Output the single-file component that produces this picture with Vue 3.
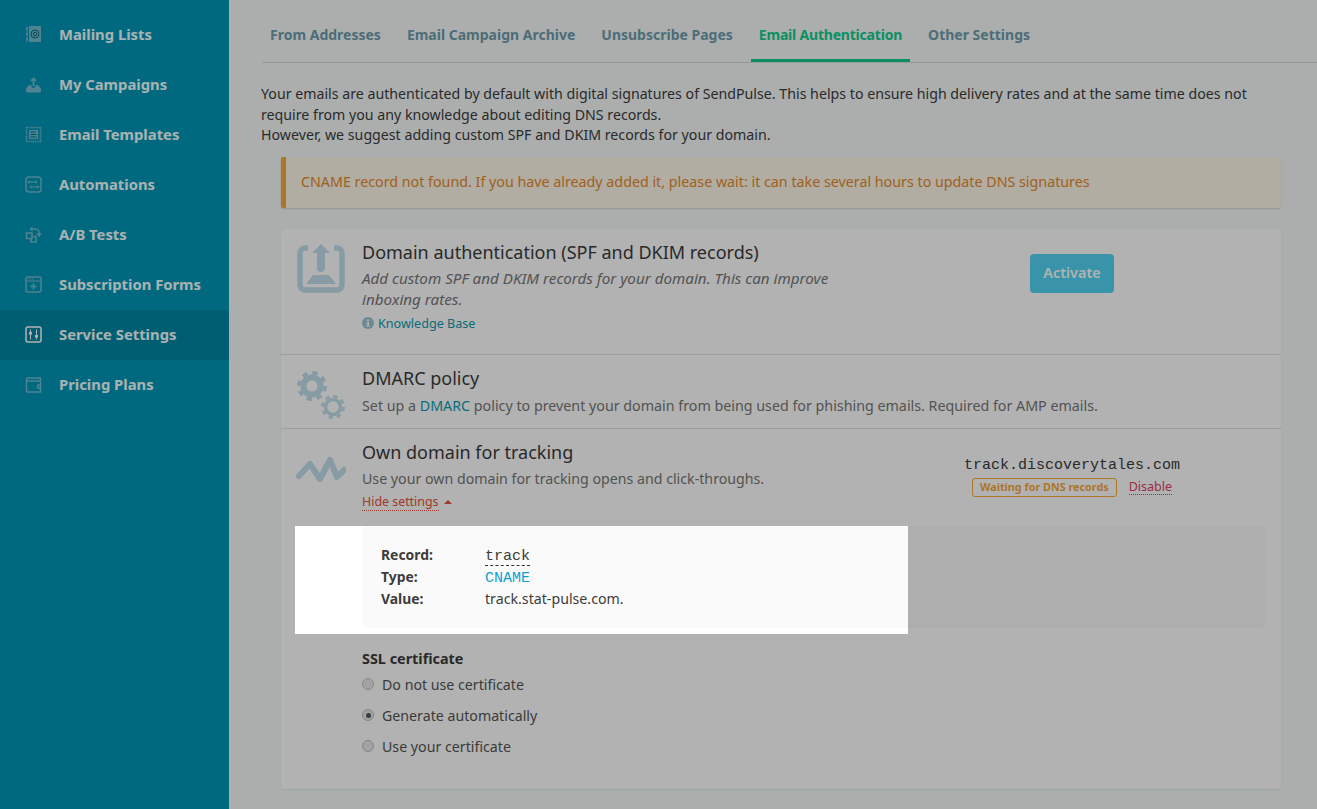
<script setup>
const navItems = [
  { label: 'Mailing Lists', icon: '<path fill="currentColor" stroke="none" d="M4 0h12v16H4z"/><path stroke-width="1" d="M2 .500v15"/><path stroke-width="2.200" d="M1 2.500h2M1 8h2M1 13.500h2"/><circle cx="10" cy="8" r="4" stroke="#006a80" stroke-width="1"/><circle cx="10" cy="8" r="1.700" stroke="#006a80" stroke-width="1"/>' },
  { label: 'My Campaigns', icon: '<path fill="currentColor" stroke="none" d="M4 9h2.500v1.500L8 12h1l1.500-1.500V9H13l3 3.500V15a1.500 1.500 0 0 1-1.500 1.500h-12A1.500 1.500 0 0 1 1 15v-2.500z"/><path stroke-width="1.800" d="M8.500 10V3M6 5l2.500-2.500L11 5"/>' },
  { label: 'Email Templates', icon: '<rect x="1.500" y="1.500" width="14" height="14" stroke-dasharray="1.500 .8" stroke-width="1.600"/><path fill="currentColor" stroke="none" d="M4 4h9v9H4z"/><path stroke="#006a80" stroke-width="1" d="M5.500 6h5M5.500 8.500h6M5.500 11h6"/>' },
  { label: 'Automations', icon: '<rect x="1" y="1" width="15" height="15" rx="3"/><path stroke-width="1" d="M4 6h6M7 11h6"/><circle cx="4" cy="6" r="1" stroke-width="1"/><circle cx="11" cy="6" r="1" stroke-width="1"/><circle cx="6" cy="11" r="1" stroke-width="1"/><circle cx="13" cy="11" r="1" stroke-width="1"/>' },
  { label: 'A/B Tests', icon: '<rect x="1.500" y="7" width="5.500" height="5.500" stroke-width="1.600"/><path stroke-width="1.600" d="M8 10.500h3v5.500H6v-3"/><path stroke-width="1.600" d="M7 3h3.500a3.500 3.500 0 0 1 3.500 3.500V8"/><path fill="currentColor" stroke="none" d="M11 7.500h6l-3 3.500zM7.500.500v5L4.500 3z"/>' },
  { label: 'Subscription Forms', icon: '<rect x="1" y="1" width="15" height="15" rx="1.500"/><path stroke-width="1" d="M1 5h15M3 3h1M5 3h1M7 3h1"/><path stroke-width="1.500" d="M8.500 7.500v6M5.500 10.500h6"/>' },
  { label: 'Service Settings', active: true, icon: '<rect x="1" y="1" width="15" height="15" rx="2"/><path stroke-width="1" d="M5.500 3.500v10M11.500 3.500v10"/><path fill="currentColor" stroke="none" d="M4 6h3v2.500H4zM10 9h3v2.500h-3z"/>' },
  { label: 'Pricing Plans', icon: '<path d="M1.500 4.500V15a1 1 0 0 0 1 1h13V5H2.500a1 1 0 0 1-1-1 2 2 0 0 1 1-2H15.500v3"/><path stroke-width="1.300" d="M16 9h-3.500v3H16"/>' },
]

const tabs = [
  { label: 'From Addresses' },
  { label: 'Email Campaign Archive' },
  { label: 'Unsubscribe Pages' },
  { label: 'Email Authentication', active: true },
  { label: 'Other Settings' },
]

const sslOptions = [
  { label: 'Do not use certificate' },
  { label: 'Generate automatically', checked: true },
  { label: 'Use your certificate' },
]
</script>

<template>
  <div class="page">
    <aside class="sidebar">
      <a v-for="item in navItems" :key="item.label" class="nav-item" :class="{ active: item.active }">
        <svg class="nav-icon" viewBox="0 0 17 17" fill="none" stroke="currentColor" stroke-width="1.500" v-html="item.icon"></svg>
        <span>{{ item.label }}</span>
      </a>
    </aside>

    <main class="main">
      <nav class="tabs">
        <a v-for="tab in tabs" :key="tab.label" class="tab" :class="{ active: tab.active }">{{ tab.label }}</a>
      </nav>

      <div class="content">
        <p class="intro">
          Your emails are authenticated by default with digital signatures of SendPulse. This helps to ensure high delivery rates and at the same time does not require from you any knowledge about editing DNS records.<br>
          However, we suggest adding custom SPF and DKIM records for your domain.
        </p>

        <div class="alert">CNAME record not found. If you have already added it, please wait: it can take several hours to update DNS signatures</div>

        <section class="card">
          <div class="row row-domain">
            <svg class="row-icon" viewBox="0 0 50 50" fill="none">
              <path d="M12 4H9a5 5 0 0 0-5 5v32a5 5 0 0 0 5 5h32a5 5 0 0 0 5-5V9a5 5 0 0 0-5-5h-3" stroke="#c2dfeb" stroke-width="5.500"/>
              <path d="M25 0l9 9h-5v15a4 4 0 0 1-8 0V9h-5z" fill="#c2dfeb"/>
              <path d="M17 31h16l7 9H10z" fill="#c2dfeb"/>
            </svg>
            <div class="row-body domain-body">
              <h3>Domain authentication (SPF and DKIM records)</h3>
              <p class="desc italic">Add custom SPF and DKIM records for your domain. This can improve inboxing rates.</p>
              <a class="kb">
                <svg viewBox="0 0 12 12" width="12" height="12"><circle cx="6" cy="6" r="6" fill="#9cc5d6"/><path d="M5 2.500h2v1.500H5zM4.700 5h2.300v3.500h.7v1H4.500v-1h.7V6h-.5z" fill="#fff"/></svg>
                Knowledge Base
              </a>
            </div>
            <div class="row-side domain-side"><button class="btn">Activate</button></div>
          </div>

          <div class="row row-dmarc">
            <svg class="row-icon" viewBox="0 0 50 50" fill="none" stroke="#c2dfeb">
              <circle cx="16" cy="15" r="8.500" stroke-width="6"/>
              <circle cx="16" cy="15" r="13" stroke-width="4" stroke-dasharray="5.200 5"/>
              <circle cx="37" cy="36" r="7.500" stroke-width="3.500"/>
              <circle cx="37" cy="36" r="10.500" stroke-width="3" stroke-dasharray="4.200 4.050"/>
            </svg>
            <div class="row-body">
              <h3>DMARC policy</h3>
              <p class="desc">Set up a <a class="link">DMARC</a> policy to prevent your domain from being used for phishing emails. Required for AMP emails.</p>
            </div>
          </div>

          <div class="row-tracking">
            <div class="row row-own">
              <svg class="row-icon wave" viewBox="0 0 50 28" fill="none">
                <path d="M3 21 L14 9 L24 24 L34 5 L41 22 L48 15" stroke="#c2dfeb" stroke-width="6" stroke-linecap="round" stroke-linejoin="round"/>
              </svg>
              <div class="row-body domain-body">
                <h3>Own domain for tracking</h3>
                <p class="desc">Use your own domain for tracking opens and click-throughs.</p>
                <div class="toggle-line"><a class="toggle">Hide settings</a><span class="caret"></span></div>
              </div>
              <div class="row-side own-side">
                <div class="domain-name">track.discoverytales.com</div>
                <div class="status-line">
                  <span class="badge">Waiting for DNS records</span>
                  <a class="disable">Disable</a>
                </div>
              </div>
            </div>

            <div class="settings">
              <div class="record-panel">
                <div class="highlight">
                  <dl class="record">
                    <dt>Record:</dt>
                    <dd class="mono"><span class="dashed">track</span></dd>
                    <dt>Type:</dt>
                    <dd class="mono cname">CNAME</dd>
                    <dt>Value:</dt>
                    <dd>track.stat-pulse.com.</dd>
                  </dl>
                </div>
              </div>

              <h4>SSL certificate</h4>
              <label v-for="opt in sslOptions" :key="opt.label" class="radio">
                <span class="dot" :class="{ checked: opt.checked }"></span>{{ opt.label }}
              </label>
            </div>
          </div>
        </section>
      </div>
    </main>

    <div class="overlay"></div>
  </div>
</template>

<style>
html, body {
  margin: 0;
  overflow: hidden;
}
</style>

<style scoped>
.page {
  display: flex;
  height: 809px;
  overflow: hidden;
  position: relative;
  background: #f6fafa;
  font-family: "Noto Sans", sans-serif;
  font-size: 14.200px;
  color: #3c3c3c;
}

.overlay {
  position: absolute;
  inset: 0;
  background: rgba(0, 0, 0, 0.3);
  z-index: 10;
}

.sidebar {
  width: 229px;
  flex: none;
  padding-top: 10px;
  background: #0097b7;
}

.nav-item {
  display: flex;
  align-items: center;
  height: 50px;
  padding-left: 25px;
  padding-bottom: 2px;
  box-sizing: border-box;
  color: #f2ffff;
  font-weight: 700;
  font-size: 14.800px;
}

.nav-item.active {
  background: #0087a4;
}

.nav-icon {
  width: 17px;
  height: 17px;
  margin-right: 17px;
  color: #70bcd0;
}

.nav-item.active .nav-icon {
  color: #fff;
}

.main {
  flex: 1;
  min-width: 0;
}

.tabs {
  display: flex;
  gap: 10px;
  height: 62px;
  margin-left: 33px;
  border-bottom: 1px solid #d5dcdf;
}

.tab {
  display: flex;
  align-items: center;
  height: 62px;
  padding: 9px 8px 0;
  box-sizing: border-box;
  border-bottom: 3px solid transparent;
  font-size: 14px;
  font-weight: 700;
  color: #6f9cab;
}

.tab.active {
  color: #10cd8c;
  border-bottom-color: #10cd8c;
  letter-spacing: -0.200px;
}

.content {
  padding: 21px 36px 0 32px;
}

.intro {
  margin: 0 0 11px;
  line-height: 20.500px;
}

.alert {
  margin-left: 20px;
  height: 51px;
  display: flex;
  align-items: center;
  padding: 0 0 2px 15px;
  box-sizing: border-box;
  border-left: 5px solid #f7a93c;
  background: #fef8e8;
  border-radius: 2px;
  color: #e68a2e;
  font-size: 14.270px;
  box-shadow: 0 1px 2px rgba(0, 0, 0, 0.15);
}

.card {
  margin-top: 21px;
  margin-left: 20px;
  height: 560px;
  background: #fff;
  border-radius: 3px;
  box-shadow: 0 1px 2px rgba(0, 0, 0, 0.08);
}

.row {
  display: flex;
  padding: 0 15px;
}

.row-domain {
  height: 126px;
  padding-top: 11px;
  box-sizing: border-box;
  border-bottom: 1px solid #dde2e4;
}

.row-dmarc {
  height: 74px;
  padding-top: 11px;
  box-sizing: border-box;
  border-bottom: 1px solid #dde2e4;
}

.row-own {
  padding-top: 11px;
  height: 97px;
  box-sizing: border-box;
}

.row-icon {
  width: 50px;
  height: 50px;
  flex: none;
  margin: 4px 16px 0 0;
}

.row-dmarc .row-icon {
  margin-top: 5px;
}

.row-icon.wave {
  height: 28px;
  margin-top: 15px;
}

.row-body {
  flex: 1;
  min-width: 0;
}

.domain-body {
  flex: none;
  width: 516px;
}

h3 {
  margin: 0;
  font-size: 18px;
  font-weight: 400;
  line-height: 25px;
}

.desc {
  margin: 3px 0 0;
  line-height: 21px;
  color: #777;
  max-width: 490px;
}

.row-dmarc .desc {
  max-width: none;
  margin-top: 4px;
  font-size: 14.280px;
}

.desc.italic {
  font-size: 15.200px;
  font-style: italic;
}

.kb {
  display: flex;
  align-items: center;
  gap: 4px;
  margin-top: 5px;
  font-size: 12.600px;
  color: #0f9cae;
}

.link {
  color: #0f9cae;
}

.row-side {
  flex: 1;
  display: flex;
  flex-direction: column;
  align-items: center;
}

.domain-side {
  padding-top: 14px;
}

.btn {
  width: 84px;
  height: 39px;
  padding-bottom: 3px;
  border: none;
  border-radius: 4px;
  background: #52d4f2;
  color: #fff;
  font: inherit;
  font-size: 14.400px;
  font-weight: 600;
}

.own-side {
  padding-top: 15px;
}

.domain-name {
  font-family: "Liberation Mono", monospace;
  font-size: 15px;
  line-height: 22px;
}

.status-line {
  display: flex;
  align-items: center;
  gap: 12px;
  margin-top: 1px;
}

.badge {
  border: 1px solid #f7a93c;
  border-radius: 3px;
  padding: 0 7px;
  height: 19px;
  box-sizing: border-box;
  line-height: 16px;
  font-size: 10.800px;
  font-weight: 700;
  color: #f7a93c;
}

.disable {
  font-size: 12.500px;
  color: #e0405f;
  border-bottom: 1px dotted #e0405f;
  line-height: 14px;
}

.toggle-line {
  margin-top: 2px;
  height: 18px;
}

.toggle {
  font-size: 12.400px;
  color: #e85040;
  border-bottom: 1px dotted #e85040;
}

.caret {
  display: inline-block;
  margin-left: 5px;
  border: 4px solid transparent;
  border-top: 0;
  border-bottom: 4px solid #e85040;
  vertical-align: 2px;
}

.settings {
  padding-left: 81px;
  padding-right: 16px;
}

.record-panel {
  position: relative;
  height: 102px;
  background: #fafafa;
  border-radius: 5px;
}

.highlight {
  position: absolute;
  left: -67px;
  top: 0;
  width: 613px;
  height: 108px;
  padding-left: 67px;
  box-sizing: border-box;
  background: #fff;
  z-index: 20;
}

.record {
  display: grid;
  grid-template-columns: 104px 1fr;
  grid-auto-rows: 22px;
  align-items: center;
  height: 102px;
  margin: 0;
  padding: 18px 0 0 19px;
  box-sizing: border-box;
  background: #fafafa;
  border-radius: 5px 0 0 5px;
}

.record dt {
  font-size: 13.900px;
  font-weight: 700;
}

.record dd {
  margin: 0;
}

.mono {
  font-family: "Liberation Mono", monospace;
  font-size: 15px;
}

.record dd.mono {
  padding-top: 3px;
}

.dashed {
  border-bottom: 1px dashed #333;
}

.cname {
  color: #0f9fd0;
}

h4 {
  margin: 21px 0 0;
  font-size: 14.400px;
  font-weight: 700;
  line-height: 20px;
}

.radio {
  display: flex;
  align-items: center;
  height: 31px;
  color: #555;
}

.dot {
  width: 12px;
  height: 12px;
  box-sizing: border-box;
  border: 1px solid #c0c0c0;
  border-radius: 50%;
  background: #e8e8e8;
  margin-right: 8px;
  position: relative;
}

.dot.checked::after {
  content: "";
  position: absolute;
  inset: 2.500px;
  border-radius: 50%;
  background: #555;
}
</style>
